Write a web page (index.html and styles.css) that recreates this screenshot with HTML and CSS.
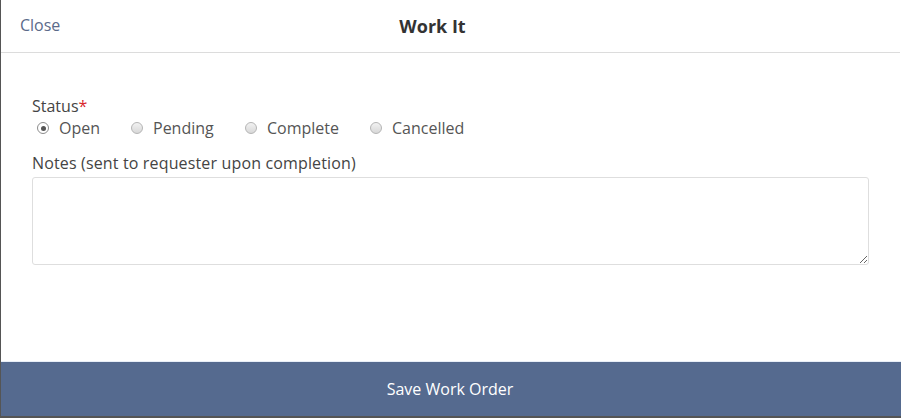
FILE: index.html
```html
<!DOCTYPE html>
<html>
<head>
<meta charset="utf-8">
<link rel="stylesheet" href="styles.css">
</head>
<body>
<div class="modal">
  <header class="header">
    <a class="close">Close</a>
    <h1 class="title">Work It</h1>
  </header>
  <main class="body">
    <div class="label">Status<span class="req">*</span></div>
    <div class="radios">
      <label class="radio"><span class="dot checked"></span>Open</label>
      <label class="radio"><span class="dot"></span>Pending</label>
      <label class="radio"><span class="dot"></span>Complete</label>
      <label class="radio"><span class="dot"></span>Cancelled</label>
    </div>
    <div class="label notes-label">Notes (sent to requester upon completion)</div>
    <textarea class="notes"></textarea>
  </main>
  <footer class="footer">Save Work Order</footer>
</div>
</body>
</html>
```
FILE: styles.css
```css
html, body {
  margin: 0;
  padding: 0;
  height: 100%;
  background: #fff;
}
body {
  font-family: "Open Sans", "Noto Sans", sans-serif;
  color: #444;
}
.modal {
  height: 418px;
  display: flex;
  flex-direction: column;
  border-left: 1px solid #555;
  box-sizing: border-box;
}
.header {
  height: 52px;
  border-bottom: 1px solid #dcdcdc;
  margin-right: 1px;
  position: relative;
  display: flex;
  align-items: center;
  justify-content: center;
  flex-shrink: 0;
}
.close {
  position: absolute;
  left: 19px;
  top: 14px;
  font-size: 16px;
  color: #5b6a8a;
}
.title {
  margin: 0;
  font-size: 18px;
  font-weight: 700;
  color: #333;
  padding-right: 36px;
  padding-bottom: 0;
}
.body {
  flex: 1;
  padding: 42px 32px 0 31px;
}
.label {
  font-size: 16px;
  line-height: 22px;
  color: #444;
}
.req {
  color: #d9262c;
}
.radios {
  display: flex;
  font-size: 16px;
  line-height: 22px;
  color: #555;
}
.radio {
  display: flex;
  align-items: center;
  padding-left: 5px;
}
.radio:nth-child(1) { width: 89px; }
.radio:nth-child(2) { width: 109px; }
.radio:nth-child(3) { width: 120px; }
.dot {
  width: 12px;
  height: 12px;
  border-radius: 50%;
  border: 1px solid #b5b5b5;
  background: linear-gradient(#f2f2f2, #d8d8d8);
  box-sizing: border-box;
  margin-right: 10px;
  position: relative;
}
.dot.checked {
  background: #fff;
  border-color: #8c8c8c;
}
.dot.checked::after {
  content: "";
  position: absolute;
  left: 2.5px;
  top: 2.5px;
  width: 5px;
  height: 5px;
  border-radius: 50%;
  background: #555;
}
.notes-label {
  margin-top: 13px;
  letter-spacing: 0.15px;
}
.notes {
  display: block;
  margin-top: 3px;
  width: 837px;
  height: 88px;
  box-sizing: border-box;
  border: 1px solid #dedede;
  border-radius: 3px;
  resize: vertical;
  font-family: inherit;
}
.footer {
  height: 54px;
  background: #556a8f;
  color: #fff;
  font-size: 16px;
  display: flex;
  align-items: center;
  justify-content: center;
  flex-shrink: 0;
  border-top: 1px solid #e8eef7;
  border-bottom: 2px solid #555;
  padding-right: 2px;
}
```
